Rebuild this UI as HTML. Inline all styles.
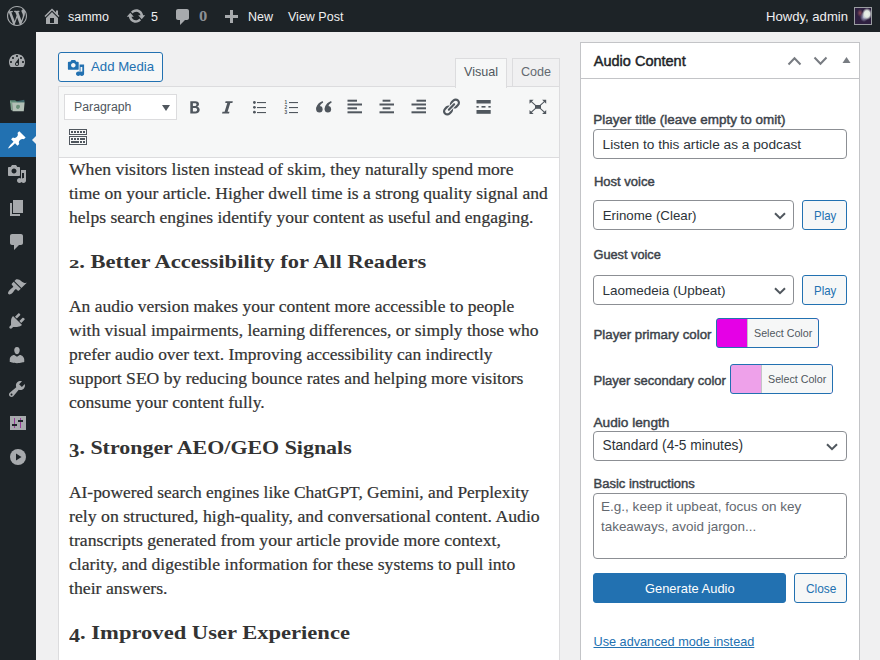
<!DOCTYPE html>
<html><head><meta charset="utf-8">
<style>
html,body{margin:0;padding:0;width:880px;height:660px;overflow:hidden;background:#f0f0f1;font-family:"Liberation Sans",sans-serif;}
.a{position:absolute;}
.t{position:absolute;line-height:1;white-space:nowrap;}
#bar{position:absolute;left:0;top:0;width:880px;height:32px;background:#1d2327;}
#bar .t{color:#f0f0f1;font-size:12.5px;}
#side{position:absolute;left:0;top:32px;width:36px;height:628px;background:#1d2327;}
.mi{position:absolute;left:0;width:36px;height:34px;}
.mi svg{position:absolute;left:8px;top:7px;width:20px;height:20px;}
#ed{position:absolute;left:58px;top:86px;width:500px;height:580px;border:1px solid #dcdcde;background:#fff;}
#tb{position:absolute;left:0;top:0;width:500px;height:70px;background:#f6f7f7;border-bottom:1px solid #dcdcde;}
.btn2{position:absolute;box-sizing:border-box;border:1px solid #2271b1;border-radius:3px;background:#f6f7f7;color:#2271b1;}
.inp{position:absolute;box-sizing:border-box;border:1px solid #8c8f94;border-radius:4px;background:#fff;color:#2c3338;}
.lbl{position:absolute;line-height:1;white-space:nowrap;color:#1d2327;font-weight:bold;font-size:12.3px;}
.art{position:absolute;left:69px;line-height:1;white-space:nowrap;font-family:"Liberation Serif",serif;color:#333;}
.p{-webkit-text-stroke:0.2px #333;}
.h{font-weight:bold;color:#333;}
</style></head><body>

<!-- ADMIN BAR -->
<div id="bar">
  <svg class="a" style="left:6.75px;top:6px" width="20" height="20" viewBox="0 0 20 20"><path fill="#a7aaad" d="M20 10c0-5.51-4.49-10-10-10C4.48 0 0 4.49 0 10c0 5.52 4.48 10 10 10 5.51 0 10-4.480 10-10zM7.78 15.37L4.37 6.22c.55-.02 1.17-.08 1.17-.08.5-.06.44-1.13-.06-1.11 0 0-1.45.11-2.37.11-.18 0-.37 0-.58-.01C4.12 2.69 6.87 1.11 10 1.11c2.33 0 4.45.87 6.05 2.34-.68-.11-1.65.39-1.65 1.58 0 .74.45 1.36.9 2.1.35.61.55 1.36.55 2.46 0 1.49-1.4 5-1.4 5l-3.03-8.37c.54-.02.82-.17.82-.17.5-.05.44-1.25-.06-1.22 0 0-1.44.12-2.38.12-.87 0-2.33-.12-2.33-.12-.5-.03-.56 1.2-.06 1.22l.92.08 1.26 3.41zM17.41 10c.24-.64.74-1.87.43-4.25.7 1.29 1.05 2.71 1.05 4.25 0 3.29-1.73 6.24-4.4 7.78.97-2.59 1.94-5.2 2.92-7.78zM6.1 18.09C3.12 16.65 1.11 13.53 1.11 10c0-1.3.23-2.48.72-3.59C3.25 10.3 4.67 14.2 6.1 18.09zm4.03-6.63l2.58 6.98c-.86.29-1.76.45-2.71.45-.79 0-1.57-.11-2.29-.33.81-2.38 1.62-4.74 2.42-7.1z"/></svg>
  <svg class="a" style="left:41.5px;top:5.8px" width="20" height="20" viewBox="0 0 20 20"><path fill="#a7aaad" d="M16 8.5l1.53 1.53-1.06 1.06L10 4.62l-6.47 6.47-1.06-1.06L10 2.5l4 4v-2h2v4zm-6-2.46l6 5.99V18H4v-5.97zM12 17v-5H8v5h4z"/></svg>
  <div class="t" style="left:68px;top:10.5px">sammo</div>
  <svg class="a" style="left:125.5px;top:5.6px" width="20" height="20" viewBox="0 0 20 20"><path fill="#a7aaad" d="M10.2 3.28c3.53 0 6.43 2.61 6.92 6h2.08l-3.5 4-3.5-4h2.32c-.45-1.97-2.21-3.45-4.32-3.45-1.45 0-2.73.71-3.54 1.78L4.95 5.66C6.23 4.2 8.11 3.28 10.2 3.28zm-.4 13.44c-3.52 0-6.43-2.61-6.92-6H.8l3.5-4c1.17 1.33 2.33 2.67 3.5 4H5.48c.45 1.97 2.21 3.45 4.32 3.45 1.45 0 2.73-.71 3.54-1.78l1.71 1.95c-1.28 1.46-3.15 2.38-5.25 2.38z"/></svg>
  <div class="t" style="left:151px;top:10.5px">5</div>
  <svg class="a" style="left:173px;top:7px" width="20" height="20" viewBox="0 0 20 20"><path fill="#a7aaad" d="M5 2h9c1.1 0 2 .9 2 2v7c0 1.1-.9 2-2 2h-2l-5 5v-5H5c-1.1 0-2-.9-2-2V4c0-1.1.9-2 2-2z"/></svg>
  <div class="t" style="left:198.8px;top:9.1px;color:#8c8f94;font-family:'Liberation Serif',serif;font-weight:bold;font-size:14.4px;transform-origin:0 0;transform:scaleX(1.15)">0</div>
  <svg class="a" style="left:221px;top:8px" width="20" height="20" viewBox="0 0 20 20"><path fill="#a7aaad" d="M17 7v3h-5v5H9v-5H4V7h5V2h3v5h5z"/></svg>
  <div class="t" style="left:248px;top:10.5px">New</div>
  <div class="t" style="left:288px;top:10.5px">View Post</div>
  <div class="t" style="left:766px;top:10px;font-size:13.1px">Howdy, admin</div>
  <div class="a" style="left:854px;top:7px;width:16px;height:16px;border:1px solid #9a9da1;background:radial-gradient(ellipse 5px 6px at 12px 6px,#eef3e8 0,#dfe6e0 55%,rgba(200,205,220,0) 100%),radial-gradient(ellipse 4px 5px at 9px 9px,#b8bcd6 0,rgba(150,150,190,0) 100%),radial-gradient(ellipse 3px 4px at 5px 5px,#8a4a5a 0,rgba(120,60,80,0) 100%),#2e2040;"></div>
</div>

<!-- SIDEBAR -->
<div id="side">
  <svg class="a" style="left:7px;top:19px" width="20" height="20" viewBox="0 0 20 20"><path fill-rule="evenodd" fill="#a7aaad" d="M3.76 16h12.48c1.1-1.37 1.76-3.11 1.76-5 0-4.42-3.58-8-8-8s-8 3.58-8 8c0 1.89.66 3.63 1.76 5zM10 4c.55 0 1 .45 1 1s-.45 1-1 1-1-.45-1-1 .45-1 1-1zM6 6c.55 0 1 .45 1 1s-.45 1-1 1-1-.45-1-1 .45-1 1-1zm8 0c.55 0 1 .45 1 1s-.45 1-1 1-1-.45-1-1 .45-1 1-1zm-5.37 5.55L12 7v6c0 1.1-.9 2-2 2s-2-.9-2-2c0-.57.24-1.08.63-1.45zM4 10c.55 0 1 .45 1 1s-.45 1-1 1-1-.45-1-1 .45-1 1-1zm12 0c.55 0 1 .45 1 1s-.45 1-1 1-1-.45-1-1 .45-1 1-1zm-5 3c0-.55-.45-1-1-1s-1 .45-1 1 .45 1 1 1 1-.45 1-1z"/></svg>
  <svg class="a" style="left:9px;top:67px" width="17" height="13" viewBox="0 0 17 13">
    <path d="M1 1.2 L6.2 1.2 L7.2 2.2 L15.2 2.2 L15.2 4 L1 4 Z" fill="#5f8a78"/>
    <path d="M8 2.2 L15.2 0.8 L15.6 3.5 L8 3.5 Z" fill="#3e666a"/>
    <path d="M1 1.6 L3 3.2 L3.6 11.8 L2 11 Z" fill="#7fa38c"/>
    <path d="M3 3.6 L15.6 3.6 L14.8 12.2 L3.6 12.2 Z" fill="#b3c0b6"/>
    <path d="M7.5 6.2 C8.5 5.3 10.2 5.5 10.8 6.6 C11.4 7.8 10.6 9.6 9.2 9.9 C8 10.1 7 9.2 7 8 Z" fill="#6b9079"/>
  </svg>
  <div class="a" style="left:0;top:91px;width:36px;height:34px;background:#2271b1"></div>
  <svg class="a" style="left:7px;top:98px" width="20" height="20" viewBox="0 0 20 20"><path fill="#fff" d="M10.44 3.02l1.82-1.82 6.36 6.35-1.83 1.82c-1.05-.68-2.48-.57-3.41.36l-.75.75c-.92.93-1.04 2.35-.35 3.41l-1.83 1.82-2.41-2.41-2.8 2.79c-.42.42-3.38 2.71-3.8 2.29s1.86-3.39 2.28-3.81l2.79-2.79L4.1 9.36l1.83-1.82c1.05.69 2.48.57 3.4-.36l.75-.75c.93-.92 1.05-2.35.36-3.41z"/></svg>
  <svg class="a" style="left:32px;top:104px" width="4" height="8" viewBox="0 0 4 8"><path d="M4 0 L0 4 L4 8 Z" fill="#f0f0f1"/></svg>
  <svg class="a" style="left:6.6px;top:132px" width="20" height="20" viewBox="0 0 20 20"><path fill="#a7aaad" d="M13 11V4c0-.55-.45-1-1-1h-1.67L9 1H5L3.67 3H2c-.55 0-1 .45-1 1v7c0 .55.45 1 1 1h10c.55 0 1-.45 1-1zM7 4.5c1.38 0 2.5 1.12 2.5 2.5S8.38 9.5 7 9.5 4.5 8.38 4.5 7 5.62 4.5 7 4.5zM14 6h5v10.5c0 1.38-1.12 2.5-2.5 2.5S14 17.88 14 16.5s1.12-2.5 2.5-2.5c.17 0 .34.02.5.05V9h-2v7.5c0 1.38-1.12 2.5-2.5 2.5S10 17.88 10 16.5s1.12-2.5 2.5-2.5c.57 0 1.08.19 1.5.51V6z"/></svg>
  <svg class="a" style="left:7px;top:166px" width="20" height="20" viewBox="0 0 20 20"><path fill="#a7aaad" d="M6 15V2h10v13H6zm-1 1h8v2H3V5h2v11z"/></svg>
  <svg class="a" style="left:7px;top:200px" width="20" height="20" viewBox="0 0 20 20"><path fill="#a7aaad" d="M5 2h9c1.1 0 2 .9 2 2v7c0 1.1-.9 2-2 2h-2l-5 5v-5H5c-1.1 0-2-.9-2-2V4c0-1.1.9-2 2-2z"/></svg>
  <svg class="a" style="left:7px;top:245px" width="20" height="20" viewBox="0 0 20 20"><path fill="#a7aaad" d="M14.48 11.06L7.41 3.99l1.5-1.5c.5-.56 2.3-.47 3.51.32 1.21.8 1.43 1.28 2.91 2.1 1.18.64 2.45 1.26 4.45.85zm-.71.71L6.7 4.7 4.93 6.47c-.39.39-.39 1.02 0 1.41l1.06 1.06c.39.39.39 1.03 0 1.42-.6.6-1.43 1.11-2.21 1.69-.35.26-.7.53-1.01.84C1.43 14.23.4 16.08 1.4 17.07c.99 1 2.84-.03 4.18-1.36.31-.31.58-.66.85-1.02.57-.78 1.08-1.61 1.69-2.21.39-.39 1.02-.39 1.41 0l1.06 1.06c.39.39 1.02.39 1.41 0z"/></svg>
  <svg class="a" style="left:7px;top:279px" width="20" height="20" viewBox="0 0 20 20"><path fill="#a7aaad" d="M13.11 4.36L9.87 7.6 8 5.73l3.24-3.24c.35-.34 1.05-.2 1.56.32.52.51.66 1.21.31 1.55zm-8 1.77l.91-1.12 9.01 9.01-1.19.84c-.71.71-2.63 1.16-3.82 1.16H6.14L4.9 17.26c-.59.59-1.54.59-2.12 0-.59-.58-.59-1.53 0-2.12l1.24-1.24v-3.88c0-1.13.4-3.19 1.09-3.89zm7.26 3.97l3.24-3.24c.34-.35 1.04-.21 1.55.31.52.51.66 1.21.31 1.55l-3.24 3.25z"/></svg>
  <svg class="a" style="left:7px;top:313px" width="20" height="20" viewBox="0 0 20 20"><path fill="#a7aaad" d="M10 9.25c-2.27 0-2.73-3.44-2.73-3.44C7 4.02 7.82 2 9.97 2c2.16 0 2.98 2.02 2.71 3.81 0 0-.41 3.44-2.68 3.44zm0 2.57L12.72 10c2.39 0 4.52 2.33 4.52 4.53v2.49s-3.65 1.130-7.24 1.13c-3.65 0-7.24-1.13-7.24-1.13v-2.49c0-2.25 1.94-4.48 4.47-4.48z"/></svg>
  <svg class="a" style="left:7px;top:347px" width="20" height="20" viewBox="0 0 20 20"><path fill="#a7aaad" d="M16.68 9.77c-1.34 1.34-3.3 1.67-4.95.99l-5.41 6.52c-.99.99-2.59.99-3.58 0s-.99-2.59 0-3.57l6.52-5.42c-.68-1.65-.35-3.61.99-4.95 1.28-1.28 3.12-1.62 4.72-1.06l-2.89 2.89 2.82 2.82 2.86-2.87c.53 1.58.18 3.39-1.08 4.65zM3.81 16.21c.4.39 1.04.39 1.43 0 .4-.4.4-1.04 0-1.43-.39-.4-1.03-.4-1.43 0-.39.39-.39 1.03 0 1.43z"/></svg>
  <div class="a" style="left:9.5px;top:384px;width:16.2px;height:14px;background:#a7aaad"></div>
  <div class="a" style="left:14px;top:386px;width:1.1px;height:10px;background:#9a3a9a"></div>
  <div class="a" style="left:19.9px;top:386px;width:1.1px;height:10px;background:#9a3a9a"></div>
  <div class="a" style="left:12.3px;top:392px;width:4.5px;height:2px;background:#1d2327"></div>
  <div class="a" style="left:18.3px;top:387.8px;width:4.5px;height:2px;background:#1d2327"></div>
  <svg class="a" style="left:10px;top:417px" width="16" height="16" viewBox="0 0 16 16">
    <circle cx="8" cy="8" r="8" fill="#a7aaad"/>
    <path d="M6 4.5 L11.5 8 L6 11.5 Z" fill="#1d2327"/>
  </svg>
</div>

<!-- EDITOR -->
<div id="main">
  <!-- Add Media -->
  <div class="btn2" style="left:58px;top:52px;width:105px;height:30px;"></div>
  <svg class="a" style="left:67px;top:59px" width="18" height="18" viewBox="0 0 20 20"><path fill="#2271b1" d="M13 11V4c0-.55-.45-1-1-1h-1.67L9 1H5L3.67 3H2c-.55 0-1 .45-1 1v7c0 .55.45 1 1 1h10c.55 0 1-.45 1-1zM7 4.5c1.38 0 2.5 1.12 2.5 2.5S8.38 9.5 7 9.5 4.5 8.38 4.5 7 5.62 4.5 7 4.5zM14 6h5v10.5c0 1.38-1.12 2.5-2.5 2.5S14 17.88 14 16.5s1.12-2.5 2.5-2.5c.17 0 .34.02.5.05V9h-2v7.5c0 1.38-1.12 2.5-2.5 2.5S10 17.88 10 16.5s1.12-2.5 2.5-2.5c.57 0 1.08.19 1.5.51V6z"/></svg>
  <div class="t" style="left:91px;top:60px;font-size:13.2px;color:#2271b1">Add Media</div>
  <!-- tabs -->
  <div class="a" style="left:512px;top:58px;width:48px;height:28px;box-sizing:border-box;border:1px solid #dcdcde;border-bottom:none;background:#f0f0f1"></div>
  <div class="t" style="left:521px;top:65.5px;font-size:12.6px;color:#646970">Code</div>
  <!-- editor container -->
  <div class="a" style="left:58px;top:86px;width:502px;height:600px;box-sizing:border-box;border:1px solid #dcdcde;background:#fff"></div>
  <div class="a" style="left:59px;top:87px;width:500px;height:70px;background:#f6f7f7;border-bottom:1px solid #dcdcde"></div>
  <div class="a" style="left:455px;top:58px;width:52px;height:30px;box-sizing:border-box;border:1px solid #dcdcde;border-bottom:none;background:#f6f7f7"></div>
  <div class="t" style="left:464px;top:65.5px;font-size:12.6px;color:#50575e">Visual</div>
  <!-- paragraph select -->
  <div class="a" style="left:64px;top:94px;width:113px;height:26px;box-sizing:border-box;border:1px solid #dcdcde;background:#fff"></div>
  <div class="t" style="left:74px;top:101px;font-size:12.3px;color:#50575e">Paragraph</div>
  <svg class="a" style="left:162px;top:104.5px" width="8" height="6" viewBox="0 0 8 6"><path d="M0 0 L8 0 L4 6 Z" fill="#50575e"/></svg>
  <div id="icons">
  <!-- B -->
  <svg class="a" style="left:190px;top:101px" width="10" height="13" viewBox="0 0 10 13">
    <path d="M0.3 0.2 L5.2 0.2 C7.8 0.2 9 1.4 9 3.1 C9 4.4 8.2 5.3 7.1 5.7 C8.6 6 9.7 7.1 9.7 8.8 C9.7 11.2 7.9 12.6 5.1 12.6 L0.3 12.6 Z M2.9 2.2 L2.9 5 L4.7 5 C5.9 5 6.5 4.4 6.5 3.5 C6.5 2.7 5.9 2.2 4.8 2.2 Z M2.9 7 L2.9 10.6 L5 10.6 C6.3 10.6 7.1 10 7.1 8.8 C7.1 7.6 6.3 7 4.9 7 Z" fill="#50575e"/>
  </svg>
  <!-- I -->
  <svg class="a" style="left:221.5px;top:101px" width="11" height="13" viewBox="0 0 11 13">
    <path d="M3.6 0.2 L10.8 0.2 L10.4 2.1 L8.3 2.1 L5.6 10.7 L7.5 10.7 L7 12.6 L0 12.6 L0.5 10.7 L2.6 10.7 L5.3 2.1 L3.2 2.1 Z" fill="#50575e"/>
  </svg>
  <!-- ul -->
  <svg class="a" style="left:252px;top:100px" width="15" height="15" viewBox="0 0 15 15">
    <circle cx="2.4" cy="2.5" r="1.4" fill="#50575e"/><circle cx="2.4" cy="7.3" r="1.4" fill="#50575e"/><circle cx="2.4" cy="12.2" r="1.4" fill="#50575e"/>
    <rect x="5" y="2" width="9" height="1.1" fill="#50575e"/><rect x="5" y="7" width="9" height="1.1" fill="#50575e"/><rect x="5" y="12" width="9" height="1.1" fill="#50575e"/>
  </svg>
  <!-- ol -->
  <svg class="a" style="left:284px;top:100px" width="15" height="15" viewBox="0 0 15 15">
    <text x="0.6" y="4.3" font-family="Liberation Sans" font-size="4.8" font-weight="bold" fill="#50575e">1</text>
    <text x="0.6" y="9.1" font-family="Liberation Sans" font-size="4.8" font-weight="bold" fill="#50575e">2</text>
    <text x="0.6" y="14" font-family="Liberation Sans" font-size="4.8" font-weight="bold" fill="#50575e">3</text>
    <rect x="5" y="2" width="9" height="1.1" fill="#50575e"/><rect x="5" y="7" width="9" height="1.1" fill="#50575e"/><rect x="5" y="12" width="9" height="1.1" fill="#50575e"/>
  </svg>
  <!-- quote -->
  <svg class="a" style="left:316px;top:101px" width="16" height="12" viewBox="0 0 16 12">
    <circle cx="3.4" cy="8.3" r="3.2" fill="#50575e"/>
    <path d="M0.25 8.6 C0.1 4.8 2.6 1.6 6.6 0.1 L7.2 1.5 C5.1 2.6 3.8 4.3 3.7 6.4 Z" fill="#50575e"/>
    <circle cx="11.9" cy="8.3" r="3.2" fill="#50575e"/>
    <path d="M8.75 8.6 C8.6 4.8 11.1 1.6 15.1 0.1 L15.7 1.5 C13.6 2.6 12.3 4.3 12.2 6.4 Z" fill="#50575e"/>
  </svg>
  <!-- align left -->
  <svg class="a" style="left:347px;top:99px" width="16" height="16" viewBox="0 0 16 16">
    <rect x="0.5" y="0.7" width="9.5" height="2" fill="#50575e"/><rect x="0.5" y="4.5" width="14.5" height="2" fill="#50575e"/>
    <rect x="0.5" y="8.3" width="9.5" height="2" fill="#50575e"/><rect x="0.5" y="12.3" width="14.5" height="2" fill="#50575e"/>
  </svg>
  <!-- align center -->
  <svg class="a" style="left:379px;top:99px" width="16" height="16" viewBox="0 0 16 16">
    <rect x="3.6" y="0.7" width="7.8" height="2" fill="#50575e"/><rect x="0.5" y="4.5" width="14.5" height="2" fill="#50575e"/>
    <rect x="3.6" y="8.3" width="7.8" height="2" fill="#50575e"/><rect x="0.5" y="12.3" width="14.5" height="2" fill="#50575e"/>
  </svg>
  <!-- align right -->
  <svg class="a" style="left:411px;top:99px" width="16" height="16" viewBox="0 0 16 16">
    <rect x="5.5" y="0.7" width="9.5" height="2" fill="#50575e"/><rect x="0.5" y="4.5" width="14.5" height="2" fill="#50575e"/>
    <rect x="5.5" y="8.3" width="9.5" height="2" fill="#50575e"/><rect x="0.5" y="12.3" width="14.5" height="2" fill="#50575e"/>
  </svg>
  <!-- link -->
  <svg class="a" style="left:441.3px;top:97px" width="20" height="20" viewBox="0 0 20 20"><path fill="#50575e" d="M17.74 2.76c1.68 1.690 1.68 4.41 0 6.1l-1.53 1.52c-1.12 1.12-2.7 1.47-4.14 1.09l2.62-2.61.76-.77.76-.76c.84-.84.84-2.2 0-3.04-.84-.85-2.2-.85-3.04 0l-.77.76-3.38 3.38c-.37-1.44-.02-3.02 1.1-4.14l1.52-1.53c1.69-1.68 4.42-1.68 6.1 0zM8.59 13.43l5.34-5.34c.42-.42.42-1.1 0-1.52-.44-.43-1.13-.39-1.53 0l-5.33 5.34c-.42.42-.42 1.1 0 1.52.44.43 1.13.39 1.52 0zm-.76 2.29l4.14-4.15c.38 1.44.03 3.02-1.09 4.14l-1.52 1.53c-1.69 1.68-4.41 1.68-6.1 0-1.68-1.68-1.68-4.42 0-6.1l1.53-1.52c1.12-1.12 2.7-1.47 4.14-1.1l-4.14 4.15c-.85.84-.85 2.2 0 3.05.84.84 2.2.84 3.04 0z"/></svg>
  <!-- more -->
  <svg class="a" style="left:475.5px;top:99px" width="15" height="15" viewBox="0 0 15 15">
    <rect x="0.5" y="1" width="14.2" height="3.5" fill="#50575e"/>
    <rect x="0.5" y="7" width="2.2" height="1.6" fill="#50575e"/><rect x="5.5" y="7" width="4" height="1.6" fill="#50575e"/><rect x="12.4" y="7" width="2.3" height="1.6" fill="#50575e"/>
    <rect x="0.5" y="11" width="14.2" height="3.8" fill="#50575e"/>
  </svg>
  <!-- fullscreen -->
  <svg class="a" style="left:529px;top:99px" width="18" height="16" viewBox="0 0 18 16">
    <rect x="6" y="6" width="6" height="3.8" fill="#50575e"/>
    <path d="M0.5 0.8 L4.6 0.8 L0.5 4.8 Z M17.2 0.8 L13.1 0.8 L17.2 4.8 Z M0.5 15 L4.6 15 L0.5 11 Z M17.2 15 L13.1 15 L17.2 11 Z" fill="#50575e"/>
    <path d="M1.8 2.1 L6.8 6.6 M15.9 2.1 L10.9 6.6 M1.8 13.7 L6.8 9.2 M15.9 13.7 L10.9 9.2" stroke="#50575e" stroke-width="1.1"/>
  </svg>
  <!-- keyboard -->
  <svg class="a" style="left:69px;top:128px" width="18" height="17" viewBox="0 0 18 17">
    <rect x="0.5" y="1.5" width="17" height="5" fill="none" stroke="#50575e" stroke-width="1"/>
    <rect x="0.5" y="8.5" width="17" height="8" fill="none" stroke="#50575e" stroke-width="1"/>
    <g fill="#50575e">
      <rect x="2" y="3" width="2" height="2"/><rect x="5" y="3" width="2" height="2"/><rect x="8" y="3" width="2" height="2"/><rect x="11" y="3" width="2" height="2"/><rect x="14" y="3" width="2" height="2"/>
      <rect x="2" y="10" width="2" height="2"/><rect x="5" y="10" width="2" height="2"/><rect x="8" y="10" width="2" height="2"/><rect x="11" y="10" width="5" height="2"/>
      <rect x="2" y="13" width="8" height="2"/><rect x="11" y="13" width="2" height="2"/><rect x="14" y="13" width="2" height="2"/>
    </g>
  </svg>
</div>
</div>

<div id="art">
<div class="art p" style="top:161.73px;left:68.90px;font-size:16.2px;letter-spacing:0;transform-origin:0 0;transform:scaleX(1.0866)">When visitors listen instead of skim, they naturally spend more</div>
<div class="art p" style="top:185.73px;left:68.90px;font-size:16.2px;letter-spacing:0;transform-origin:0 0;transform:scaleX(1.0811)">time on your article. Higher dwell time is a strong quality signal and</div>
<div class="art p" style="top:209.73px;left:68.90px;font-size:16.2px;letter-spacing:0;transform-origin:0 0;transform:scaleX(1.0831)">helps search engines identify your content as useful and engaging.</div>
<div class="art h" style="top:252.27px;left:68.90px;font-size:19.5px;letter-spacing:0;transform-origin:0 0;transform:scaleX(1.1550)"><span style="font-size:13.26px;position:relative;top:0.0px;display:inline-block;transform-origin:0 0;transform:scaleX(1.35);margin-right:2.32px">2</span>. Better Accessibility for All Readers</div>
<div class="art p" style="top:298.73px;left:68.90px;font-size:16.2px;letter-spacing:0;transform-origin:0 0;transform:scaleX(1.0778)">An audio version makes your content more accessible to people</div>
<div class="art p" style="top:322.73px;left:68.90px;font-size:16.2px;letter-spacing:0;transform-origin:0 0;transform:scaleX(1.0844)">with visual impairments, learning differences, or simply those who</div>
<div class="art p" style="top:346.73px;left:68.90px;font-size:16.2px;letter-spacing:0;transform-origin:0 0;transform:scaleX(1.0779)">prefer audio over text. Improving accessibility can indirectly</div>
<div class="art p" style="top:370.73px;left:68.90px;font-size:16.2px;letter-spacing:0;transform-origin:0 0;transform:scaleX(1.0856)">support SEO by reducing bounce rates and helping more visitors</div>
<div class="art p" style="top:394.73px;left:68.90px;font-size:16.2px;letter-spacing:0;transform-origin:0 0;transform:scaleX(1.0835)">consume your content fully.</div>
<div class="art h" style="top:437.57px;left:68.90px;font-size:19.5px;letter-spacing:0;transform-origin:0 0;transform:scaleX(1.1251)"><span style="font-size:18.52px;position:relative;top:3.0px">3</span>. Stronger AEO/GEO Signals</div>
<div class="art p" style="top:484.53px;left:68.90px;font-size:16.2px;letter-spacing:0;transform-origin:0 0;transform:scaleX(1.0742)">AI-powered search engines like ChatGPT, Gemini, and Perplexity</div>
<div class="art p" style="top:508.53px;left:68.90px;font-size:16.2px;letter-spacing:0;transform-origin:0 0;transform:scaleX(1.0957)">rely on structured, high-quality, and conversational content. Audio</div>
<div class="art p" style="top:532.53px;left:68.90px;font-size:16.2px;letter-spacing:0;transform-origin:0 0;transform:scaleX(1.0943)">transcripts generated from your article provide more context,</div>
<div class="art p" style="top:556.53px;left:68.90px;font-size:16.2px;letter-spacing:0;transform-origin:0 0;transform:scaleX(1.0890)">clarity, and digestible information for these systems to pull into</div>
<div class="art p" style="top:580.53px;left:68.90px;font-size:16.2px;letter-spacing:0;transform-origin:0 0;transform:scaleX(1.0957)">their answers.</div>
<div class="art h" style="top:622.77px;left:68.90px;font-size:19.5px;letter-spacing:0;transform-origin:0 0;transform:scaleX(1.1570)"><span style="font-size:19.11px;position:relative;top:3.6px">4</span>. Improved User Experience</div>
</div>

<!-- POSTBOX -->
<div id="pb">
<div class="a" style="left:580px;top:42px;width:280px;height:658px;box-sizing:border-box;border:1px solid #c3c4c7;background:#fff"></div>
<div class="a" style="left:581px;top:78px;width:278px;height:1px;box-sizing:border-box;background:#c3c4c7"></div>
<div class="t" style="left:593.8px;top:54.12px;font-size:14.51px;color:#1d2327;-webkit-text-stroke:0.45px #1d2327;">Audio Content</div>
<svg class="a" style="left:787px;top:56px" width="15" height="10" viewBox="0 0 15 10"><path d="M1.5 8.5 L7.5 2.2 L13.5 8.5" fill="none" stroke="#787c82" stroke-width="2"/></svg>
<svg class="a" style="left:813px;top:56px" width="15" height="10" viewBox="0 0 15 10"><path d="M1.5 1.5 L7.5 7.8 L13.5 1.5" fill="none" stroke="#787c82" stroke-width="2"/></svg>
<svg class="a" style="left:842px;top:56px" width="9" height="8" viewBox="0 0 9 8"><path d="M0.5 7 L4.5 1 L8.5 7 Z" fill="#787c82"/></svg>
<div class="t" style="left:593.3px;top:113.21px;font-size:13.46px;color:#3c434a;-webkit-text-stroke:0.45px #3c434a;">Player title (leave empty to omit)</div>
<div class="a" style="left:593px;top:129px;width:254px;height:30px;box-sizing:border-box;border:1px solid #8c8f94;border-radius:4px;background:#fff"></div>
<div class="t" style="left:602.6px;top:137.80px;font-size:13.7px;color:#2c3338;">Listen to this article as a podcast</div>
<div class="t" style="left:593.9px;top:174.96px;font-size:13.04px;color:#3c434a;-webkit-text-stroke:0.45px #3c434a;">Host voice</div>
<div class="a" style="left:593px;top:200px;width:201px;height:30px;box-sizing:border-box;border:1px solid #8c8f94;border-radius:4px;background:#fff"></div>
<div class="t" style="left:602.7px;top:208.64px;font-size:13.3px;color:#2c3338;">Erinome (Clear)</div>
<svg class="a" style="left:773.5px;top:212px" width="12" height="8" viewBox="0 0 12 8"><path d="M1 1.2 L6 6.2 L11 1.2" fill="none" stroke="#50575e" stroke-width="2"/></svg>
<div class="a" style="left:802px;top:200px;width:45px;height:30px;box-sizing:border-box;border:1px solid #2271b1;border-radius:3px;background:#f6f7f7"></div>
<div class="t" style="left:813.6px;top:209.83px;font-size:12.6px;color:#2271b1;transform-origin:0 0;transform:scaleX(0.9099);">Play</div>
<div class="t" style="left:593.5px;top:249.11px;font-size:12.75px;color:#3c434a;-webkit-text-stroke:0.45px #3c434a;">Guest voice</div>
<div class="a" style="left:593px;top:275px;width:201px;height:30px;box-sizing:border-box;border:1px solid #8c8f94;border-radius:4px;background:#fff"></div>
<div class="t" style="left:602.4px;top:283.67px;font-size:13.5px;color:#2c3338;">Laomedeia (Upbeat)</div>
<svg class="a" style="left:773.5px;top:287px" width="12" height="8" viewBox="0 0 12 8"><path d="M1 1.2 L6 6.2 L11 1.2" fill="none" stroke="#50575e" stroke-width="2"/></svg>
<div class="a" style="left:802px;top:275px;width:45px;height:30px;box-sizing:border-box;border:1px solid #2271b1;border-radius:3px;background:#f6f7f7"></div>
<div class="t" style="left:813.6px;top:284.83px;font-size:12.6px;color:#2271b1;transform-origin:0 0;transform:scaleX(0.9099);">Play</div>
<div class="t" style="left:593.5px;top:328.06px;font-size:13.28px;color:#3c434a;-webkit-text-stroke:0.45px #3c434a;">Player primary color</div>
<div class="a" style="left:716px;top:318px;width:103px;height:30px;box-sizing:border-box;border:1px solid #2271b1;border-radius:3px;background:#e500e6;overflow:hidden"></div>
<div class="a" style="left:747px;top:319px;width:71px;height:28px;box-sizing:border-box;border-left:1px solid #c3c4c7;background:#f6f7f7;border-radius:0 2px 2px 0"></div>
<div class="t" style="left:754px;top:328.24px;font-size:10.7px;color:#50575e;">Select Color</div>
<div class="t" style="left:593.5px;top:374.28px;font-size:13.02px;color:#3c434a;-webkit-text-stroke:0.45px #3c434a;">Player secondary color</div>
<div class="a" style="left:730px;top:364px;width:103px;height:30px;box-sizing:border-box;border:1px solid #2271b1;border-radius:3px;background:#eea1ea;overflow:hidden"></div>
<div class="a" style="left:761px;top:365px;width:71px;height:28px;box-sizing:border-box;border-left:1px solid #c3c4c7;background:#f6f7f7;border-radius:0 2px 2px 0"></div>
<div class="t" style="left:768px;top:374.24px;font-size:10.7px;color:#50575e;">Select Color</div>
<div class="t" style="left:593.5px;top:415.93px;font-size:13.67px;color:#3c434a;-webkit-text-stroke:0.45px #3c434a;">Audio length</div>
<div class="a" style="left:593px;top:431px;width:254px;height:30px;box-sizing:border-box;border:1px solid #8c8f94;border-radius:4px;background:#fff"></div>
<div class="t" style="left:602.5px;top:439.47px;font-size:13.74px;color:#2c3338;">Standard (4-5 minutes)</div>
<svg class="a" style="left:826.3px;top:443px" width="12" height="8" viewBox="0 0 12 8"><path d="M1 1.2 L6 6.2 L11 1.2" fill="none" stroke="#50575e" stroke-width="2"/></svg>
<div class="t" style="left:593.5px;top:476.68px;font-size:13.02px;color:#3c434a;-webkit-text-stroke:0.45px #3c434a;">Basic instructions</div>
<div class="a" style="left:593px;top:493px;width:254px;height:66px;box-sizing:border-box;border:1px solid #8c8f94;border-radius:4px;background:#fff"></div>
<div class="a" style="left:844px;top:556px;width:1.3px;height:1.3px;background:#50575e;border-radius:1px"></div>
<div class="t" style="left:601.0px;top:499.92px;font-size:13.56px;color:#646970;">E.g., keep it upbeat, focus on key</div>
<div class="t" style="left:601.0px;top:519.83px;font-size:13.43px;color:#646970;">takeaways, avoid jargon...</div>
<div class="a" style="left:593px;top:573px;width:193px;height:30px;box-sizing:border-box;border:1px solid #2271b1;border-radius:3px;background:#2271b1"></div>
<div class="t" style="left:645px;top:582.88px;font-size:12.9px;color:#fff;">Generate Audio</div>
<div class="a" style="left:794px;top:573px;width:53px;height:30px;box-sizing:border-box;border:1px solid #2271b1;border-radius:3px;background:#f6f7f7"></div>
<div class="t" style="left:805.6px;top:582.55px;font-size:12.7px;color:#2271b1;transform-origin:0 0;transform:scaleX(0.9369);">Close</div>
<div class="t" style="left:593.5px;top:635.55px;font-size:12.7px;color:#2271b1;text-decoration:underline;">Use advanced mode instead</div>
</div>

</body></html>
